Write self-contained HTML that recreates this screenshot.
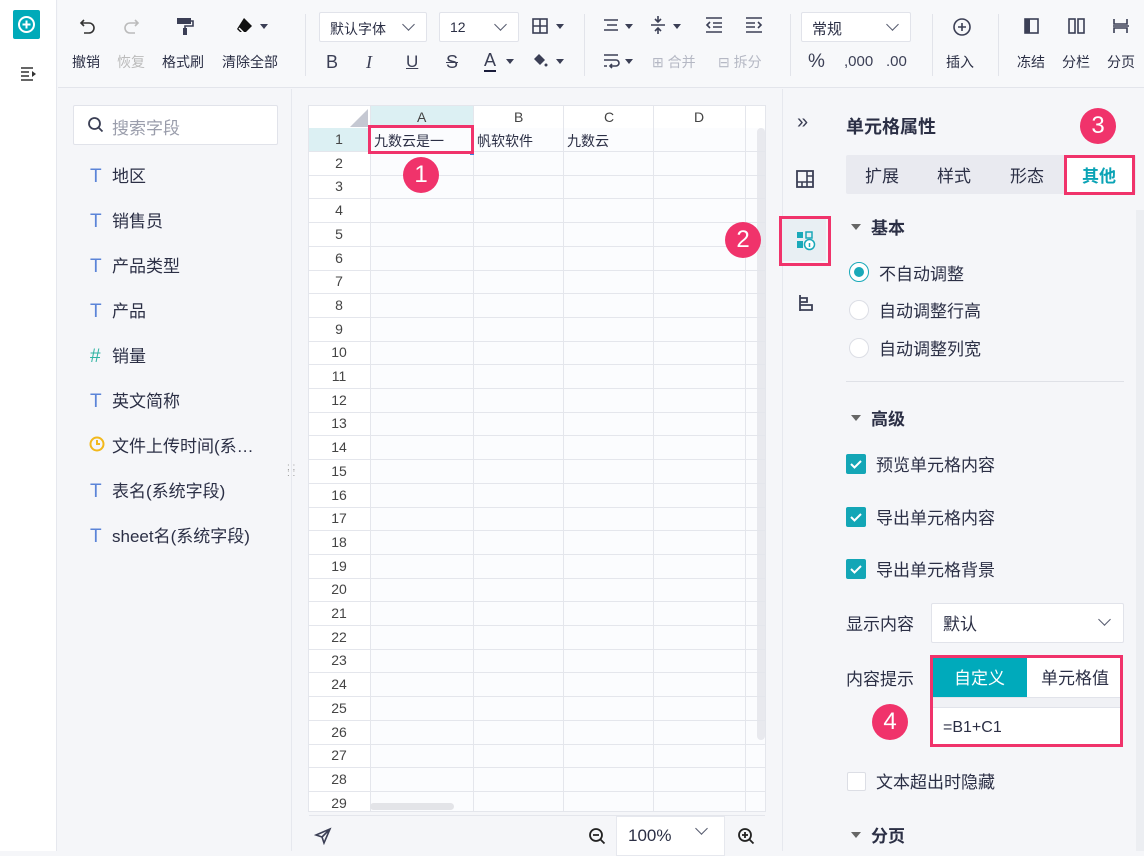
<!DOCTYPE html>
<html><head><meta charset="utf-8"><style>
*{box-sizing:border-box;margin:0;padding:0}
body{width:1144px;height:851px;overflow:hidden;background:#f5f6f9;font-family:"Liberation Sans","Noto Sans CJK SC",sans-serif;color:#2b2f45;position:relative;font-size:14px}
.a{position:absolute}
.t{font-size:14px;color:#2b2f45;white-space:nowrap}
.dd{background:#fff;border:1px solid #e1e3ea;border-radius:2px}
.chev{position:absolute;width:9px;height:9px;border-right:1.5px solid #555a6e;border-bottom:1.5px solid #555a6e;transform:rotate(45deg)}
.tri{display:inline-block;width:0;height:0;border-left:4px solid transparent;border-right:4px solid transparent;border-top:5px solid #3b3f55;vertical-align:middle;margin-left:3px}
.sep{position:absolute;width:1px;background:#e2e4ea}
.red{position:absolute;border:3px solid #f0336b}
.badge{position:absolute;width:36px;height:36px;border-radius:50%;background:#f0336b;color:#fff;font-size:24px;text-align:center;line-height:36px}
.gl{position:absolute;background:#e4e6ec}
.rn{position:absolute;left:308px;width:62px;text-align:center;font-size:14px;color:#444}
.fi{position:absolute;left:90px;font-size:17px;color:#2b2f45}
.fi b{display:inline-block;width:22px;color:#5b84d8;font-weight:normal;font-size:19px}
</style></head><body>
<div class="a" style="left:0;top:0;width:57px;height:851px;background:#fff;border-right:1px solid #e6e8ee"></div>
<div class="a" style="left:13px;top:10px;width:27px;height:29px;background:#00aab9;border-radius:2px"></div>
<svg class="a" style="left:16px;top:14px" width="21" height="21" viewBox="0 0 21 21"><circle cx="10.5" cy="10.5" r="7.5" fill="none" stroke="#fff" stroke-width="2"/><path d="M10.5 6.5v8M6.5 10.5h8" stroke="#fff" stroke-width="2"/></svg>
<svg class="a" style="left:20px;top:66px" width="18" height="16" viewBox="0 0 18 16"><path d="M1 2h12M1 6h8M1 10h8M1 14h12" stroke="#333" stroke-width="1.6"/><path d="M12 5l4 3-4 3z" fill="#333"/></svg>
<div class="a" style="left:58px;top:0;width:1086px;height:88px;background:#f7f8fa;border-bottom:1px solid #e3e5eb"></div>
<svg class="a" style="left:78px;top:16px" width="20" height="20" viewBox="0 0 20 20"><path d="M6 4L3 7l3 3M3 7h8a5 5 0 010 10H6" fill="none" stroke="#333" stroke-width="1.6"/></svg>
<svg class="a" style="left:121px;top:16px" width="20" height="20" viewBox="0 0 20 20"><path d="M14 4l3 3-3 3M17 7H9a5 5 0 000 10h5" fill="none" stroke="#bbb" stroke-width="1.6"/></svg>
<svg class="a" style="left:175px;top:16px" width="20" height="20" viewBox="0 0 20 20"><rect x="2" y="2" width="14" height="6" fill="#3b3f55"/><path d="M16 5h2v5H10v3" fill="none" stroke="#3b3f55" stroke-width="1.6"/><rect x="8" y="12" width="4" height="7" fill="#3b3f55"/></svg>
<svg class="a" style="left:235px;top:16px" width="22" height="20" viewBox="0 0 22 20"><path d="M9 2l8 8-6 6H5l-3-3z" fill="#111"/><path d="M4 12l5 5" stroke="#fff" stroke-width="1.5"/></svg><span class="tri a" style="left:257px;top:24px"></span>
<div class="a t" style="left:72px;top:52px">撤销</div>
<div class="a t" style="left:117px;top:52px;color:#bbb">恢复</div>
<div class="a t" style="left:162px;top:52px">格式刷</div>
<div class="a t" style="left:222px;top:52px">清除全部</div>
<div class="sep" style="left:305px;top:14px;height:62px"></div>
<div class="a dd" style="left:319px;top:12px;width:108px;height:30px"><span class="a t" style="left:10px;top:6px;font-size:14px">默认字体</span><span class="chev" style="left:84px;top:7px"></span></div>
<div class="a dd" style="left:439px;top:12px;width:80px;height:30px"><span class="a t" style="left:10px;top:6px">12</span><span class="chev" style="left:56px;top:7px"></span></div>
<svg class="a" style="left:532px;top:18px" width="16" height="16" viewBox="0 0 16 16"><rect x="1" y="1" width="14" height="14" fill="none" stroke="#3b3f55" stroke-width="1.6"/><path d="M8 1v14M1 8h14" stroke="#3b3f55" stroke-width="1.6"/></svg><span class="tri a" style="left:553px;top:24px"></span>
<div class="a" style="left:326px;top:52px;font-size:18px;color:#3b3f55">B</div>
<div class="a" style="left:366px;top:52px;font-size:18px;color:#3b3f55;font-style:italic;font-family:'Liberation Serif',serif">I</div>
<div class="a" style="left:406px;top:52px;font-size:17px;color:#3b3f55;text-decoration:underline">U</div>
<div class="a" style="left:446px;top:52px;font-size:18px;color:#3b3f55;text-decoration:line-through">S</div>
<div class="a" style="left:484px;top:50px;font-size:18px;color:#3b3f55;border-bottom:2px solid #1a1d3a;line-height:20px">A</div><span class="tri a" style="left:503px;top:59px"></span>
<svg class="a" style="left:532px;top:52px" width="16" height="18" viewBox="0 0 16 18"><path d="M7 2l6 6-5 5-6-6z" fill="#3b3f55"/><circle cx="14" cy="13" r="1.5" fill="#3b3f55"/></svg><span class="tri a" style="left:553px;top:59px"></span>
<div class="sep" style="left:584px;top:14px;height:62px"></div>
<svg class="a" style="left:603px;top:17px" width="18" height="16"><path d="M1 3h14M4 8h10M1 13h14" stroke="#3b3f55" stroke-width="1.6"/></svg><span class="tri a" style="left:622px;top:24px"></span>
<svg class="a" style="left:650px;top:15px" width="16" height="20"><path d="M1 10h14M8 1v6M5 4l3 3 3-3M8 19v-6M5 16l3-3 3 3" fill="none" stroke="#3b3f55" stroke-width="1.6"/></svg><span class="tri a" style="left:670px;top:24px"></span>
<svg class="a" style="left:705px;top:17px" width="18" height="16"><path d="M1 1h16M8 6h9M8 10h9M1 15h16M5 5L2 8l3 3" fill="none" stroke="#3b3f55" stroke-width="1.6"/></svg>
<svg class="a" style="left:745px;top:17px" width="18" height="16"><path d="M1 1h16M1 6h9M1 10h9M1 15h16M13 5l3 3-3 3" fill="none" stroke="#3b3f55" stroke-width="1.6"/></svg>
<svg class="a" style="left:603px;top:53px" width="18" height="16"><path d="M1 2h14M1 7h12a3 3 0 010 6H7M1 13h3M9 11l-2 2 2 2" fill="none" stroke="#3b3f55" stroke-width="1.6"/></svg><span class="tri a" style="left:622px;top:59px"></span>
<div class="a t" style="left:652px;top:52px;color:#b5b8c4">⊞ 合并</div>
<div class="a t" style="left:718px;top:52px;color:#b5b8c4">⊟ 拆分</div>
<div class="sep" style="left:790px;top:14px;height:62px"></div>
<div class="a dd" style="left:801px;top:12px;width:110px;height:30px"><span class="a t" style="left:10px;top:5px;font-size:15px">常规</span><span class="chev" style="left:86px;top:7px"></span></div>
<div class="a" style="left:808px;top:51px;font-size:19px;color:#3b3f55">%</div>
<div class="a" style="left:844px;top:53px;font-size:15px;color:#3b3f55">,000</div>
<div class="a" style="left:886px;top:53px;font-size:15px;color:#3b3f55">.00</div>
<div class="sep" style="left:932px;top:14px;height:62px"></div>
<svg class="a" style="left:952px;top:17px" width="20" height="20"><circle cx="10" cy="10" r="8" fill="none" stroke="#3b3f55" stroke-width="1.6"/><path d="M10 6v8M6 10h8" stroke="#3b3f55" stroke-width="1.6"/></svg>
<div class="a t" style="left:946px;top:52px">插入</div>
<div class="sep" style="left:998px;top:14px;height:62px"></div>
<svg class="a" style="left:1024px;top:18px" width="16" height="16"><rect x="1" y="1" width="13" height="14" fill="none" stroke="#3b3f55" stroke-width="1.6"/><rect x="1" y="1" width="5" height="14" fill="#3b3f55"/></svg>
<svg class="a" style="left:1068px;top:18px" width="18" height="16"><rect x="1" y="1" width="6" height="14" fill="none" stroke="#3b3f55" stroke-width="1.6"/><rect x="10" y="1" width="6" height="14" fill="none" stroke="#3b3f55" stroke-width="1.6"/></svg>
<svg class="a" style="left:1112px;top:18px" width="18" height="16"><path d="M2 1v5h13V1M1 8h16M2 15v-5h13v5" fill="none" stroke="#3b3f55" stroke-width="1.6"/></svg>
<div class="a t" style="left:1017px;top:52px">冻结</div>
<div class="a t" style="left:1062px;top:52px">分栏</div>
<div class="a t" style="left:1107px;top:52px">分页</div>
<div class="a" style="left:58px;top:89px;width:234px;height:762px;background:#f5f6f9;border-right:1px solid #e6e8ee"></div>
<div class="a dd" style="left:73px;top:105px;width:205px;height:40px"></div>
<svg class="a" style="left:87px;top:116px" width="18" height="18"><circle cx="7.5" cy="7.5" r="5.5" fill="none" stroke="#3b3f55" stroke-width="1.8"/><path d="M11.5 11.5l4 4" stroke="#3b3f55" stroke-width="1.8"/></svg>
<div class="a" style="left:112px;top:114px;font-size:17px;color:#9a9dab">搜索字段</div>
<div class="fi" style="top:162px"><b>T</b>地区</div>
<div class="fi" style="top:207px"><b>T</b>销售员</div>
<div class="fi" style="top:252px"><b>T</b>产品类型</div>
<div class="fi" style="top:297px"><b>T</b>产品</div>
<div class="fi" style="top:342px"><b style="color:#2fb3a2">#</b>销量</div>
<div class="fi" style="top:387px"><b>T</b>英文简称</div>
<svg class="a" style="left:89px;top:436px" width="16" height="16"><circle cx="8" cy="8" r="6.5" fill="none" stroke="#f2b81b" stroke-width="2"/><path d="M8 4v4h3" fill="none" stroke="#f2b81b" stroke-width="2"/></svg>
<div class="fi" style="top:432px;left:112px">文件上传时间(系…</div>
<div class="fi" style="top:477px"><b>T</b>表名(系统字段)</div>
<div class="fi" style="top:522px"><b>T</b>sheet名(系统字段)</div>
<div class="a" style="left:287px;top:465px;color:#999;font-size:10px;line-height:6px">: :<br>: :</div>
<div class="a" style="left:308px;top:105px;width:458px;height:707px;background:#fbfcfe;border:1px solid #e4e6ec"></div>
<div class="a" style="left:309px;top:106px;width:61px;height:705px;background:#fff"></div>
<div class="a" style="left:309px;top:106px;width:456px;height:22px;background:#fff"></div>
<div class="a" style="left:370px;top:106px;width:103px;height:22px;background:#dcf0f3"></div>
<div class="a" style="left:309px;top:128px;width:61px;height:23px;background:#dcf0f3"></div>
<svg class="a" style="left:350px;top:109px" width="18" height="18"><path d="M18 0v18H0z" fill="#c5c8d2"/></svg>
<div class="a" style="left:417px;top:109px;font-size:14px;color:#444">A</div>
<div class="a" style="left:514px;top:109px;font-size:14px;color:#444">B</div>
<div class="a" style="left:604px;top:109px;font-size:14px;color:#444">C</div>
<div class="a" style="left:694px;top:109px;font-size:14px;color:#444">D</div>
<div class="gl" style="left:370px;top:106px;width:1px;height:705px"></div>
<div class="gl" style="left:473px;top:106px;width:1px;height:705px"></div>
<div class="gl" style="left:563px;top:106px;width:1px;height:705px"></div>
<div class="gl" style="left:653px;top:106px;width:1px;height:705px"></div>
<div class="gl" style="left:745px;top:106px;width:1px;height:705px"></div>
<div class="a" style="left:757px;top:128px;width:8px;height:612px;background:#e8e9ee;border-radius:4px"></div>
<div class="a" style="left:370px;top:803px;width:84px;height:7px;background:#e3e4e8;border-radius:4px"></div>
<div id="rows"></div>
<div class="a" style="left:374px;top:131px;font-size:14px">九数云是一</div>
<div class="a" style="left:477px;top:131px;font-size:14px">帆软软件</div>
<div class="a" style="left:567px;top:131px;font-size:14px">九数云</div>
<div class="a" style="left:470px;top:151px;width:4px;height:4px;background:#3a7ee0"></div>
<div class="red" style="left:368px;top:125px;width:106px;height:29px"></div>
<div class="badge" style="left:403px;top:157px">1</div>
<svg class="a" style="left:314px;top:827px" width="18" height="18"><path d="M16 2L2 8l6 2 2 6z M8 10l8-8" fill="none" stroke="#3b3f55" stroke-width="1.6"/></svg>
<svg class="a" style="left:588px;top:827px" width="18" height="18"><circle cx="8" cy="8" r="6" fill="none" stroke="#222" stroke-width="1.8"/><path d="M5 8h6M12.5 12.5l4 4" stroke="#222" stroke-width="1.8"/></svg>
<div class="a" style="left:616px;top:816px;width:109px;height:40px;background:#fff;border:1px solid #e6e8ee"></div>
<div class="a" style="left:628px;top:826px;font-size:17px">100%</div>
<span class="chev" style="left:697px;top:824px"></span>
<svg class="a" style="left:737px;top:827px" width="18" height="18"><circle cx="8" cy="8" r="6" fill="none" stroke="#222" stroke-width="1.8"/><path d="M5 8h6M8 5v6M12.5 12.5l4 4" stroke="#222" stroke-width="1.8"/></svg>
<div class="a" style="left:782px;top:89px;width:48px;height:762px;background:#f5f6f9;border-left:1px solid #e6e8ee"></div>
<div class="a" style="left:797px;top:111px;font-size:20px;color:#3b3f55">»</div>
<svg class="a" style="left:796px;top:170px" width="18" height="18"><rect x="1" y="1" width="16" height="16" fill="none" stroke="#3b3f55" stroke-width="1.8"/><path d="M1 12h16M6 12v5M11 12v5M11 1v11M11 6h6" stroke="#3b3f55" stroke-width="1.6"/></svg>
<div class="a" style="left:781px;top:219px;width:45px;height:42px;background:#e8eff3"></div>
<svg class="a" style="left:796px;top:231px" width="20" height="20"><rect x="1" y="1" width="6" height="6" fill="#1aa9b9"/><rect x="1" y="10" width="6" height="7" fill="#1aa9b9"/><rect x="10" y="1" width="6" height="6" fill="none" stroke="#1aa9b9" stroke-width="1.5"/><circle cx="13.5" cy="13.5" r="5" fill="#fff" stroke="#1aa9b9" stroke-width="1.5"/><path d="M13.5 12v4" stroke="#1aa9b9" stroke-width="1.5"/></svg>
<div class="red" style="left:779px;top:216px;width:52px;height:50px"></div>
<div class="badge" style="left:725px;top:222px">2</div>
<svg class="a" style="left:797px;top:294px" width="18" height="18"><path d="M3 1v16M3 4h7v4H3M3 11h12v5H3" fill="none" stroke="#3b3f55" stroke-width="1.8"/></svg>
<div class="a" style="left:831px;top:89px;width:313px;height:762px;background:#f5f6f9"></div>
<div class="a" style="left:846px;top:113px;font-size:18px;font-weight:bold">单元格属性</div>
<div class="badge" style="left:1080px;top:108px">3</div>
<div class="a" style="left:846px;top:155px;width:290px;height:39px;background:#e9eaf0;border-radius:2px"></div>
<div class="a" style="left:865px;top:162px;font-size:17px">扩展</div>
<div class="a" style="left:937px;top:162px;font-size:17px">样式</div>
<div class="a" style="left:1010px;top:162px;font-size:17px">形态</div>
<div class="a" style="left:1066px;top:157px;width:66px;height:35px;background:#fff"></div>
<div class="a" style="left:1082px;top:162px;font-size:17px;font-weight:bold;color:#0aa3b5">其他</div>
<div class="red" style="left:1064px;top:155px;width:71px;height:40px"></div>
<div class="a" style="left:1136px;top:210px;width:8px;height:641px;background:#eceef2"></div>
<div class="a" style="left:851px;top:224px;border-left:5px solid transparent;border-right:5px solid transparent;border-top:6px solid #666"></div>
<div class="a" style="left:871px;top:214px;font-size:17px;font-weight:bold">基本</div>
<div class="a" style="left:849px;top:262px;width:20px;height:20px;border-radius:50%;border:1.5px solid #19a9b9;background:#fff"></div>
<div class="a" style="left:854px;top:267px;width:10px;height:10px;border-radius:50%;background:#19a9b9"></div>
<div class="a" style="left:879px;top:260px;font-size:17px">不自动调整</div>
<div class="a" style="left:849px;top:300px;width:20px;height:20px;border-radius:50%;border:1px solid #dcdee5;background:#fff"></div>
<div class="a" style="left:879px;top:297px;font-size:17px">自动调整行高</div>
<div class="a" style="left:849px;top:338px;width:20px;height:20px;border-radius:50%;border:1px solid #dcdee5;background:#fff"></div>
<div class="a" style="left:879px;top:335px;font-size:17px">自动调整列宽</div>
<div class="a" style="left:846px;top:381px;width:278px;height:1px;background:#dfe1e7"></div>
<div class="a" style="left:851px;top:415px;border-left:5px solid transparent;border-right:5px solid transparent;border-top:6px solid #666"></div>
<div class="a" style="left:871px;top:405px;font-size:17px;font-weight:bold">高级</div>
<svg class="a" style="left:846px;top:454px" width="20" height="20"><rect width="20" height="20" rx="2" fill="#13a6b6"/><path d="M5 10l3.5 3.5L15 7" fill="none" stroke="#fff" stroke-width="2"/></svg>
<div class="a" style="left:876px;top:451px;font-size:17px">预览单元格内容</div>
<svg class="a" style="left:846px;top:507px" width="20" height="20"><rect width="20" height="20" rx="2" fill="#13a6b6"/><path d="M5 10l3.5 3.5L15 7" fill="none" stroke="#fff" stroke-width="2"/></svg>
<div class="a" style="left:876px;top:504px;font-size:17px">导出单元格内容</div>
<svg class="a" style="left:846px;top:559px" width="20" height="20"><rect width="20" height="20" rx="2" fill="#13a6b6"/><path d="M5 10l3.5 3.5L15 7" fill="none" stroke="#fff" stroke-width="2"/></svg>
<div class="a" style="left:876px;top:556px;font-size:17px">导出单元格背景</div>
<div class="a" style="left:846px;top:610px;font-size:17px">显示内容</div>
<div class="a dd" style="left:931px;top:603px;width:193px;height:40px"><span class="a" style="left:11px;top:6px;font-size:17px">默认</span><span class="chev" style="left:168px;top:11px"></span></div>
<div class="a" style="left:846px;top:665px;font-size:17px">内容提示</div>
<div class="a" style="left:933px;top:658px;width:187px;height:86px;background:#fff"></div>
<div class="a" style="left:933px;top:658px;width:94px;height:39px;background:#00aabb"></div>
<div class="a" style="left:954px;top:664px;font-size:17px;color:#fff">自定义</div>
<div class="a" style="left:1041px;top:664px;font-size:17px">单元格值</div>
<div class="a" style="left:933px;top:697px;width:187px;height:11px;background:#f0f1f5;border-top:1px solid #e1e3ea;border-bottom:1px solid #e1e3ea"></div>
<div class="a" style="left:943px;top:719px;font-size:16px">=B1+C1</div>
<div class="red" style="left:930px;top:655px;width:193px;height:92px"></div>
<div class="badge" style="left:872px;top:704px">4</div>
<div class="a" style="left:847px;top:772px;width:19px;height:19px;background:#fff;border:1px solid #dcdee5;border-radius:2px"></div>
<div class="a" style="left:876px;top:768px;font-size:17px">文本超出时隐藏</div>
<div class="a" style="left:851px;top:832px;border-left:5px solid transparent;border-right:5px solid transparent;border-top:6px solid #666"></div>
<div class="a" style="left:871px;top:822px;font-size:17px;font-weight:bold">分页</div>
<script>
var h='';for(var i=1;i<=29;i++){var y=128+(i-1)*23.7;h+='<div class="gl" style="left:309px;top:'+(y+23).toFixed(1)+'px;width:456px;height:1px"></div><div class="rn" style="top:'+(y+3).toFixed(1)+'px">'+i+'</div>';}
var r=document.getElementById('rows');r.outerHTML=h;
</script>
</body></html>
